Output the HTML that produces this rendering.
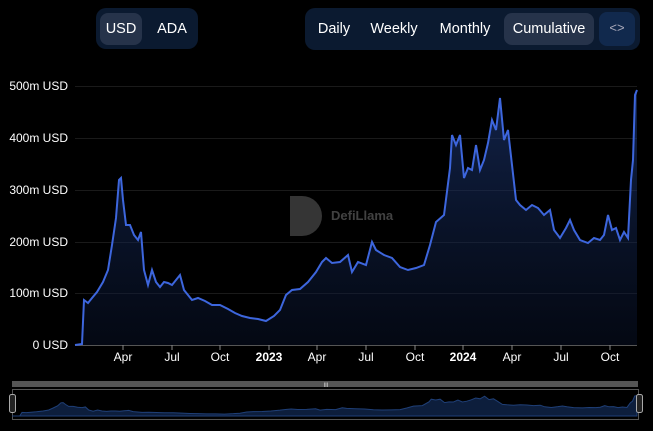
<!DOCTYPE html><html><head><style>
body{margin:0;background:#000;width:653px;height:431px;overflow:hidden;font-family:"Liberation Sans",sans-serif;position:relative}
.g{position:absolute;background:#0b1a30;border-radius:10px}
.b{position:absolute;color:#fff;font-size:14.5px;line-height:32px;text-align:center;border-radius:8px}
.sel{background:#26334a}
.yl{position:absolute;left:0;width:68px;text-align:right;color:#fff;font-size:12px}
.xl{position:absolute;top:350px;color:#fff;font-size:12px;transform:translateX(-50%)}
</style></head><body>
<div class="g" style="left:96px;top:8px;width:102px;height:41px"></div>
<div class="b sel" style="left:100px;top:13px;width:42px">USD</div>
<div class="b" style="left:150px;top:13px;width:44px">ADA</div>
<div class="g" style="left:305px;top:8px;width:335px;height:42px"></div>
<div class="b" style="left:310px;top:13px;width:48px">Daily</div>
<div class="b" style="left:362px;top:13px;width:64px">Weekly</div>
<div class="b" style="left:432px;top:13px;width:66px">Monthly</div>
<div class="b sel" style="left:504px;top:13px;width:90px">Cumulative</div>
<div class="b" style="left:599px;top:12px;width:36px;height:34px;background:#11294d;color:#aab;font-size:13px">&lt;&gt;</div>
<div class="yl" style="top:79px">500m USD</div>
<div class="yl" style="top:131px">400m USD</div>
<div class="yl" style="top:183px">300m USD</div>
<div class="yl" style="top:235px">200m USD</div>
<div class="yl" style="top:286px">100m USD</div>
<div class="yl" style="top:338px">0 USD</div>
<svg width="653" height="431" style="position:absolute;left:0;top:0">
<defs><linearGradient id="a" x1="0" y1="0" x2="0" y2="1"><stop offset="0" stop-color="#1e3a7a" stop-opacity=".6"/><stop offset="1" stop-color="#0a1530" stop-opacity=".4"/></linearGradient>
<path id="p" d="M75,345 L82,344 L84,300 L88,303 L92,298 L97,292 L103,282 L108,270 L112,245 L116,218 L119,180 L121,178 L123,200 L126,225 L130,225 L134,235 L138,240 L141,232 L144,270 L148,285 L152,270 L156,282 L160,287 L164,282 L168,283 L172,285 L176,280 L180,275 L184,290 L188,295 L192,300 L198,298 L205,301 L212,305 L220,305 L228,309 L235,313 L242,316 L250,318 L258,319 L266,321 L274,316 L280,310 L286,295 L292,290 L300,289 L308,282 L316,272 L322,262 L326,258 L332,263 L340,262 L348,255 L352,272 L358,262 L366,265 L372,242 L376,250 L384,255 L392,258 L400,267 L408,270 L416,268 L424,265 L430,245 L436,222 L444,215 L450,168 L452,135 L456,145 L460,135 L464,178 L468,168 L472,170 L476,145 L480,170 L484,160 L488,143 L492,120 L496,130 L500,98 L504,140 L508,130 L512,165 L516,200 L520,205 L526,210 L532,205 L538,208 L544,215 L550,210 L554,230 L560,238 L566,228 L570,220 L574,230 L580,240 L588,243 L594,238 L600,240 L604,235 L608,215 L612,230 L616,228 L620,240 L624,232 L628,238 L631,180 L633,160 L635,95 L637,90"/></defs>
<g stroke="#1a1a1a" stroke-width="1"><line x1="75" y1="86.5" x2="637" y2="86.5"/><line x1="75" y1="138.5" x2="637" y2="138.5"/><line x1="75" y1="190.5" x2="637" y2="190.5"/><line x1="75" y1="242.5" x2="637" y2="242.5"/><line x1="75" y1="293.5" x2="637" y2="293.5"/></g>
<line x1="75" y1="345.5" x2="637" y2="345.5" stroke="#555"/>
<g stroke="#888">
<line x1="123" y1="345" x2="123" y2="350"/><line x1="172" y1="345" x2="172" y2="350"/><line x1="220" y1="345" x2="220" y2="350"/><line x1="269" y1="345" x2="269" y2="350"/><line x1="317" y1="345" x2="317" y2="350"/><line x1="366" y1="345" x2="366" y2="350"/><line x1="415" y1="345" x2="415" y2="350"/><line x1="463" y1="345" x2="463" y2="350"/><line x1="512" y1="345" x2="512" y2="350"/><line x1="561" y1="345" x2="561" y2="350"/><line x1="610" y1="345" x2="610" y2="350"/></g>
<path d="M75,345 L82,344 L84,300 L88,303 L92,298 L97,292 L103,282 L108,270 L112,245 L116,218 L119,180 L121,178 L123,200 L126,225 L130,225 L134,235 L138,240 L141,232 L144,270 L148,285 L152,270 L156,282 L160,287 L164,282 L168,283 L172,285 L176,280 L180,275 L184,290 L188,295 L192,300 L198,298 L205,301 L212,305 L220,305 L228,309 L235,313 L242,316 L250,318 L258,319 L266,321 L274,316 L280,310 L286,295 L292,290 L300,289 L308,282 L316,272 L322,262 L326,258 L332,263 L340,262 L348,255 L352,272 L358,262 L366,265 L372,242 L376,250 L384,255 L392,258 L400,267 L408,270 L416,268 L424,265 L430,245 L436,222 L444,215 L450,168 L452,135 L456,145 L460,135 L464,178 L468,168 L472,170 L476,145 L480,170 L484,160 L488,143 L492,120 L496,130 L500,98 L504,140 L508,130 L512,165 L516,200 L520,205 L526,210 L532,205 L538,208 L544,215 L550,210 L554,230 L560,238 L566,228 L570,220 L574,230 L580,240 L588,243 L594,238 L600,240 L604,235 L608,215 L612,230 L616,228 L620,240 L624,232 L628,238 L631,180 L633,160 L635,95 L637,90 L637,345 Z" fill="url(#a)"/>
<use href="#p" fill="none" stroke="#3d66dd" stroke-width="2"/>
<g opacity=".35"><path d="M290,196 h12 a18,18 0 0 1 0,40 h-12 z" fill="#999"/><text x="331" y="220" fill="#bbb" font-size="13" font-weight="bold" font-family="Liberation Sans">DefiLlama</text></g>
<rect x="12" y="381" width="626" height="6" fill="#555"/>
<text x="326" y="387" fill="#ddd" font-size="6" text-anchor="middle">III</text>
<rect x="12.5" y="389.5" width="626" height="30" fill="none" stroke="#555"/>
<g transform="matrix(1.112,0,0,0.08,-71.4,388.4)"><path d="M75,345 L82,344 L84,300 L88,303 L92,298 L97,292 L103,282 L108,270 L112,245 L116,218 L119,180 L121,178 L123,200 L126,225 L130,225 L134,235 L138,240 L141,232 L144,270 L148,285 L152,270 L156,282 L160,287 L164,282 L168,283 L172,285 L176,280 L180,275 L184,290 L188,295 L192,300 L198,298 L205,301 L212,305 L220,305 L228,309 L235,313 L242,316 L250,318 L258,319 L266,321 L274,316 L280,310 L286,295 L292,290 L300,289 L308,282 L316,272 L322,262 L326,258 L332,263 L340,262 L348,255 L352,272 L358,262 L366,265 L372,242 L376,250 L384,255 L392,258 L400,267 L408,270 L416,268 L424,265 L430,245 L436,222 L444,215 L450,168 L452,135 L456,145 L460,135 L464,178 L468,168 L472,170 L476,145 L480,170 L484,160 L488,143 L492,120 L496,130 L500,98 L504,140 L508,130 L512,165 L516,200 L520,205 L526,210 L532,205 L538,208 L544,215 L550,210 L554,230 L560,238 L566,228 L570,220 L574,230 L580,240 L588,243 L594,238 L600,240 L604,235 L608,215 L612,230 L616,228 L620,240 L624,232 L628,238 L631,180 L633,160 L635,95 L637,90 L637,345 Z" fill="#0d1e3c" stroke="#1f3f77" stroke-width="1" vector-effect="non-scaling-stroke"/></g>
<rect x="9.5" y="394.5" width="6" height="18" rx="2" fill="#222" stroke="#aaa"/>
<rect x="636.5" y="394.5" width="6" height="18" rx="2" fill="#222" stroke="#aaa"/>
</svg>
<div class="xl" style="left:123px">Apr</div><div class="xl" style="left:172px">Jul</div><div class="xl" style="left:220px">Oct</div><div class="xl" style="left:269px;font-weight:bold">2023</div><div class="xl" style="left:317px">Apr</div><div class="xl" style="left:366px">Jul</div><div class="xl" style="left:415px">Oct</div><div class="xl" style="left:463px;font-weight:bold">2024</div><div class="xl" style="left:512px">Apr</div><div class="xl" style="left:561px">Jul</div><div class="xl" style="left:610px">Oct</div>
</body></html>
